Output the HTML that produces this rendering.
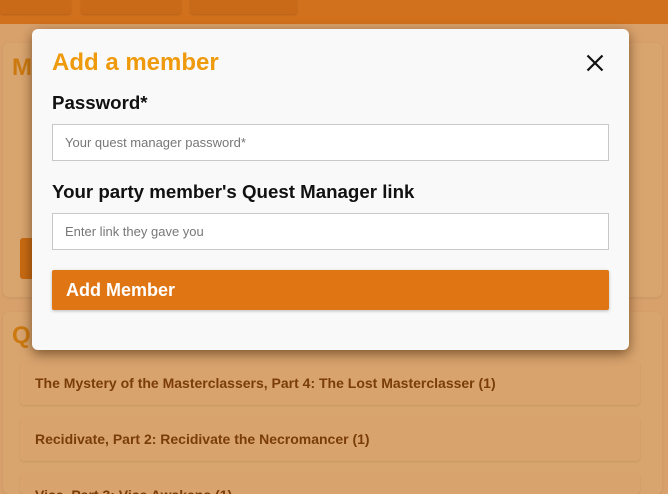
<!DOCTYPE html>
<html style="overflow:hidden;width:668px;height:494px"><head><style>
body{margin:0;width:668px;height:494px;overflow:hidden;background:#d8a16c;font-family:"Liberation Sans",sans-serif;position:relative}
.top{position:absolute;left:0;top:0;width:668px;height:24px;background:#d2711d}
.tb{position:absolute;top:0;height:14px;background:#c96a18;border-radius:0 0 3px 3px;box-shadow:0 1px 2px rgba(0,0,0,.15)}
.card{position:absolute;left:3px;width:659px;background:#d9a56f;border-radius:6px;box-shadow:0 1px 3px rgba(0,0,0,.08)}
.q{position:absolute;left:20px;width:620px;height:44px;background:#d9a36e;border-radius:4px;box-shadow:0 1px 2px rgba(0,0,0,.1);font-size:14px;font-weight:bold;color:#7a3d08;line-height:44px;padding-left:15px;box-sizing:border-box}
.big{position:absolute;font-size:24px;font-weight:bold;color:#cc7a10}
.modal{position:absolute;left:32px;top:29px;width:597px;height:321px;background:#f9f9f9;border-radius:6px;box-shadow:0 4px 12px rgba(60,30,0,.6)}
h2{position:absolute;left:20px;top:20px;margin:0;font-size:24px;color:#ef9a0c;font-weight:bold}
.lbl{position:absolute;left:20px;font-size:18.7px;font-weight:bold;color:#111}
.in{position:absolute;left:20px;width:557px;height:37px;box-sizing:border-box;border:1px solid #c8c8c8;background:#fff;font-size:13px;color:#777;padding-left:12px;line-height:35px}
.btn{position:absolute;left:20px;top:241px;width:557px;height:40px;background:#e07514;border-radius:2px;box-shadow:0 1px 3px rgba(0,0,0,.25);color:#fff;font-size:18px;font-weight:bold;line-height:40px;padding-left:14px;box-sizing:border-box}
</style></head><body>
<div class="top"></div>
<div class="tb" style="left:0;width:71px"></div>
<div class="tb" style="left:81px;width:100px"></div>
<div class="tb" style="left:190px;width:107px"></div>
<div class="card" style="top:43px;height:254px"></div>
<div class="big" style="left:12px;top:54px">M</div>
<div style="position:absolute;left:20px;top:238px;width:20px;height:41px;background:#c86a12;border-radius:3px"></div>
<div class="card" style="top:312px;height:182px"></div>
<div class="big" style="left:12px;top:322px">Q</div>
<div class="q" style="top:361px">The Mystery of the Masterclassers, Part 4: The Lost Masterclasser (1)</div>
<div class="q" style="top:417px">Recidivate, Part 2: Recidivate the Necromancer (1)</div>
<div class="q" style="top:473px;height:21px;overflow:hidden">Vice, Part 3: Vice Awakens (1)</div>
<div class="modal">
<h2>Add a member</h2>
<svg style="position:absolute;left:554px;top:25px" width="18" height="18" viewBox="0 0 18 18"><path d="M1.5 1.5L16.5 16.5M16.5 1.5L1.5 16.5" stroke="#111" stroke-width="2.2"/></svg>
<div class="lbl" style="top:63px">Password*</div>
<div class="in" style="top:95px">Your quest manager password*</div>
<div class="lbl" style="top:152px">Your party member's Quest Manager link</div>
<div class="in" style="top:184px">Enter link they gave you</div>
<div class="btn">Add Member</div>
</div>
</body></html>
